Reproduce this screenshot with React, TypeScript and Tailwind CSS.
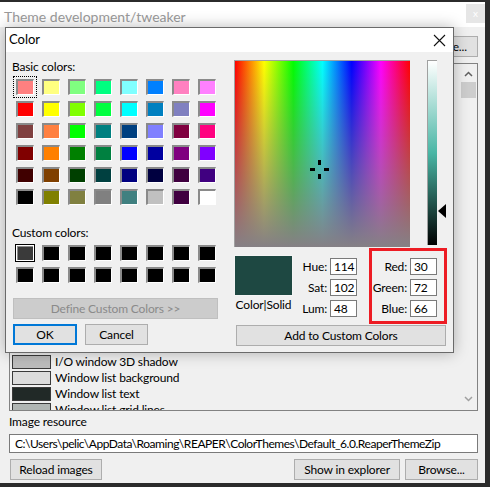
const basicColors = [
  ['#ff8080', '#ffff80', '#80ff80', '#00ff80', '#80ffff', '#0080ff', '#ff80c0', '#ff80ff'],
  ['#ff0000', '#ffff00', '#80ff00', '#00ff40', '#00ffff', '#0080c0', '#8080c0', '#ff00ff'],
  ['#804040', '#ff8040', '#00ff00', '#008080', '#004080', '#8080ff', '#800040', '#ff0080'],
  ['#800000', '#ff8000', '#008000', '#008040', '#0000ff', '#0000a0', '#800080', '#8000ff'],
  ['#400000', '#804000', '#004000', '#004040', '#000080', '#000040', '#400040', '#400080'],
  ['#000000', '#808000', '#808040', '#808080', '#408080', '#c0c0c0', '#400040', '#ffffff'],
]

const listItems = [
  { name: 'Main window/transport background', color: '#e8e8e8' },
  { name: 'Main window/transport text', color: '#202020' },
  { name: 'Main window 3D highlight', color: '#ffffff' },
  { name: 'Main window 3D shadow', color: '#a0a0a0' },
  { name: 'Main window pane resize mouseover', color: '#9c9c9c' },
  { name: 'Window text', color: '#000000' },
  { name: 'Window background', color: '#f0f0f0' },
  { name: 'Button background', color: '#e1e1e1' },
  { name: 'Button text', color: '#000000' },
  { name: 'Button 3D highlight', color: '#ffffff' },
  { name: 'Button 3D shadow', color: '#a0a0a0' },
  { name: 'Button pane resize mouseover', color: '#b0b0b0' },
  { name: 'Text editor text', color: '#000000' },
  { name: 'Text editor background', color: '#ffffff' },
  { name: 'I/O window text', color: '#202020' },
  { name: 'I/O window background', color: '#d8d8d8' },
  { name: 'I/O window 3D highlight', color: '#f4f4f4' },
  { name: 'I/O window 3D highlight 2', color: '#e4e4e4' },
  { name: 'I/O window 3D shadow', color: '#bdbdbd' },
  { name: 'Window list background', color: '#dcdcdc' },
  { name: 'Window list text', color: '#212927' },
  { name: 'Window list grid lines', color: '#b1b6b4' },
  { name: 'Window list selected row', color: '#c6d6e6' },
]

function Swatch({ color }: { color: string }) {
  return (
    <div
      className="w-[18px] h-[16px] border-t-2 border-l-2 border-t-[#8a8a8a] border-l-[#8a8a8a] border-b border-r border-b-white border-r-white"
      style={{ backgroundColor: color }}
    />
  )
}

function WinButton({ children, className = '' }: { children: React.ReactNode; className?: string }) {
  return (
    <div className={`h-[21px] flex items-center justify-center whitespace-nowrap bg-[#e1e1e1] border border-[#adadad] text-black ${className}`}>
      {children}
    </div>
  )
}

function Field({ label, value }: { label: string; value: string }) {
  return (
    <>
      <span className="text-right leading-[17px]">{label}</span>
      <div className="h-[17px] bg-white border border-[#7a7a7a] pl-[3px] leading-[15px]">{value}</div>
    </>
  )
}

function ColorDialog() {
  return (
    <div className="absolute left-[5px] top-[27px] w-[449px] h-[326px] border border-[#6a6a6a] bg-[#f0f0f0] shadow-[0_0_14px_rgba(0,0,0,0.28)] flex flex-col">
      {/* title */}
      <div className="h-[24px] bg-white flex items-center justify-between pl-[3px] pr-[7px]">
        <span className="text-[13px] text-black tracking-normal">Color</span>
        <svg width="13" height="13" viewBox="0 0 13 13">
          <path d="M1 1 L12 12 M12 1 L1 12" stroke="#111" strokeWidth="1.1" fill="none" />
        </svg>
      </div>

      <div className="flex-1 flex">
        {/* left side */}
        <div className="w-[228px] flex flex-col pl-[6px] pt-[7px]">
          <div className="leading-[16px]">Basic colors:</div>
          <div className="ml-[4px] mt-[4px] grid grid-cols-[repeat(8,18px)] gap-x-[8px] gap-y-[6px]">
            {basicColors.flat().map((c, i) => (
              <div key={i} className="relative">
                <Swatch color={c} />
                {i === 0 && <div className="absolute -inset-[3px] border border-dotted border-black" />}
              </div>
            ))}
          </div>
          <div className="leading-[16px] mt-[20px]">Custom colors:</div>
          <div className="ml-[4px] mt-[4px] grid grid-cols-[repeat(8,18px)] gap-x-[8px] gap-y-[6px]">
            {Array.from({ length: 16 }).map((_, i) =>
              i === 0 ? (
                <div key={i} className="w-[18px] h-[16px] outline outline-1 outline-black border border-white">
                  <div className="w-full h-full bg-[#3a3a3a] border-t border-l border-[#8a8a8a]" />
                </div>
              ) : (
                <Swatch key={i} color="#000000" />
              )
            )}
          </div>
          <div className="ml-[1px] mt-[15px] w-[205px] h-[21px] flex items-center justify-center bg-[#cccccc] border border-[#bfbfbf] text-[#8a8a8a]">
            Define Custom Colors &gt;&gt;
          </div>
          <div className="ml-[1px] mt-[5px] flex gap-[8px]">
            <div className="w-[64px] h-[21px] flex items-center justify-center bg-[#e1e1e1] border-2 border-[#0078d7]">OK</div>
            <WinButton className="w-[63px]">Cancel</WinButton>
          </div>
        </div>

        {/* right side */}
        <div className="flex-1 flex flex-col pt-[8px]">
          <div className="flex items-start">
            <div className="relative w-[176px] h-[187px] border-t border-l border-[#a0a0a0] bg-[image:linear-gradient(to_bottom,rgba(128,128,128,0),#858085),linear-gradient(to_right,#ff0000,#ffff00,#00ff00,#00ffff,#0000ff,#ff00ff,#ff0000)]">
              <div className="absolute left-[83px] top-[99px] w-[3px] h-[5px] bg-black" />
              <div className="absolute left-[83px] top-[113px] w-[3px] h-[5px] bg-black" />
              <div className="absolute left-[75px] top-[107px] w-[5px] h-[3px] bg-black" />
              <div className="absolute left-[89px] top-[107px] w-[5px] h-[3px] bg-black" />
            </div>
            <div className="relative ml-[17px] w-[10px] h-[185px] border-t border-l border-[#a0a0a0] bg-[image:linear-gradient(to_bottom,#ffffff,#49b6a5,#000000)]">
              <div className="absolute left-[10px] top-[143px] w-0 h-0 border-y-[7px] border-y-transparent border-r-[8px] border-r-black" />
            </div>
          </div>

          <div className="flex items-start mt-[1px]">
            <div className="mt-[7px] flex flex-col items-center">
              <div className="w-[59px] h-[41px] bg-[#1e4842] border border-[#f4f4f4]" />
              <div className="mt-[1px] leading-[16px]">Color|Solid</div>
            </div>
            <div className="mt-[10px] grid grid-cols-[34px_27px] gap-x-[3px] gap-y-[4px] items-center">
              {[['Hue:', '114'], ['Sat:', '102'], ['Lum:', '48']].map(([l, v]) => (
                <Field key={l} label={l} value={v} />
              ))}
            </div>
            <div className="ml-[12px] w-[78px] border-[3px] border-[#ed1c24] pt-[7px] pb-[4px] pr-[7px] grid grid-cols-[35px_27px] gap-x-[3px] gap-y-[4px] items-center">
              {[['Red:', '30'], ['Green:', '72'], ['Blue:', '66']].map(([l, v]) => (
                <Field key={l} label={l} value={v} />
              ))}
            </div>
          </div>
          <WinButton className="ml-[2px] mt-[1px] w-[210px]">Add to Custom Colors</WinButton>
        </div>
      </div>
    </div>
  )
}

export default function App() {
  return (
    <div className="relative w-[490px] h-[487px] bg-[#2b2b2b] overflow-hidden font-['Lato','Noto_Sans',sans-serif] text-[12px] tracking-[-0.15px] text-black">
      <div className="h-[2px]" />
      <div className="w-[485px] h-[481px] bg-[#f0f0f0] flex flex-col">
        {/* background window title */}
        <div className="h-[25px] bg-white flex items-start justify-between pl-[4px]">
          <span className="mt-[4px] text-[14px] tracking-normal text-[#9a9a9a]">Theme development/tweaker</span>
          <div className="mt-[2px] w-[19px] h-[19px] bg-[#e6e6e6] flex items-center justify-center text-[10px] text-white">x</div>
        </div>

        <div className="flex-1 flex flex-col pl-[9px] pr-[7px]">
          <div className="mt-[9px] flex justify-end">
            <WinButton className="w-[90px]">Save theme...</WinButton>
          </div>

          {/* list */}
          <div className="mt-[6px] h-[348px] border border-[#828282] bg-[#f0f0f0] flex overflow-hidden">
            <div className="flex-1 pt-[2px] pl-[2px] overflow-hidden">
              {listItems.map((it) => (
                <div key={it.name} className="h-[16px] flex items-center gap-[4px] whitespace-nowrap">
                  <div className="w-[39px] h-[14px] border border-[#3a3a3a]" style={{ backgroundColor: it.color }} />
                  <span className="leading-[16px]">{it.name}</span>
                </div>
              ))}
            </div>
            <div className="w-[17px] flex flex-col items-center bg-[#f0f0f0]">
              <svg className="mt-[7px]" width="9" height="6" viewBox="0 0 9 6">
                <path d="M1 5 L4.5 1.5 L8 5" stroke="#606060" strokeWidth="1.5" fill="none" />
              </svg>
              <div className="mt-[5px] w-[15px] h-[16px] bg-[#cdcdcd]" />
              <div className="flex-1" />
              <svg className="mb-[8px]" width="9" height="6" viewBox="0 0 9 6">
                <path d="M1 1 L4.5 4.5 L8 1" stroke="#a0a0a0" strokeWidth="1.5" fill="none" />
              </svg>
            </div>
          </div>

          <div className="mt-[3px] leading-[16px]">Image resource</div>
          <div className="mt-[4px] h-[19px] bg-white border border-[#7a7a7a] pl-[5px] leading-[17px] tracking-[-0.45px] whitespace-nowrap overflow-hidden">
            C:\Users\pelic\AppData\Roaming\REAPER\ColorThemes\Default_6.0.ReaperThemeZip
          </div>
          <div className="mt-[6px] flex">
            <WinButton className="ml-[1px] w-[92px]">Reload images</WinButton>
            <div className="flex-1" />
            <WinButton className="w-[106px]">Show in explorer</WinButton>
            <WinButton className="ml-[5px] w-[73px]">Browse...</WinButton>
          </div>
        </div>
      </div>
      <ColorDialog />
    </div>
  )
}
